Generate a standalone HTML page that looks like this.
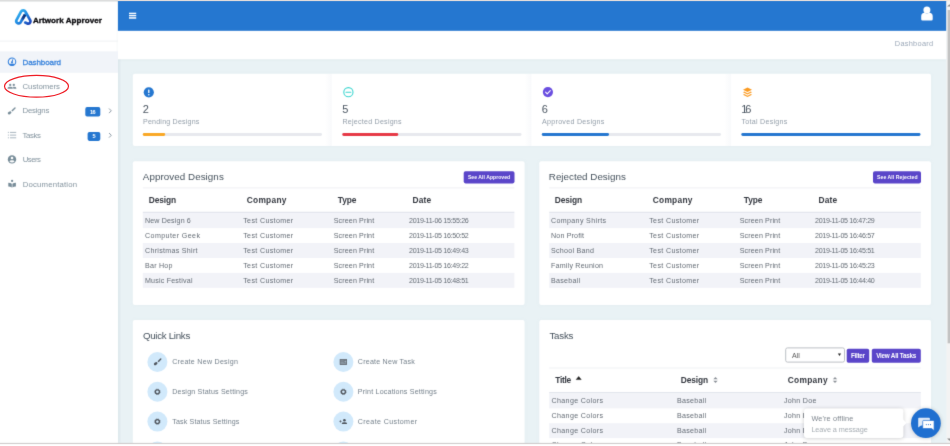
<!DOCTYPE html>
<html><head><meta charset="utf-8">
<style>
*{box-sizing:border-box;margin:0;padding:0}
html,body{width:950px;height:446px;overflow:hidden;background:#e9f2f5;font-family:"Liberation Sans",sans-serif}
svg{position:absolute;left:0;top:0}
</style></head><body>
<svg width="950" height="446" viewBox="0 0 950 446" font-family="Liberation Sans, sans-serif">
<defs>
<filter id="soft" x="0" y="0" width="100%" height="100%" filterUnits="userSpaceOnUse" color-interpolation-filters="sRGB"><feConvolveMatrix order="3" kernelMatrix="0.0113 0.0838 0.0113 0.0838 0.6193 0.0838 0.0113 0.0838 0.0113" edgeMode="duplicate" preserveAlpha="true"/></filter>
<linearGradient id="lg" gradientUnits="userSpaceOnUse" x1="16" y1="10" x2="31" y2="25"><stop offset="0" stop-color="#38c2f6"/><stop offset=".5" stop-color="#1f86e0"/><stop offset="1" stop-color="#1a35b0"/></linearGradient>
<linearGradient id="lg2" gradientUnits="userSpaceOnUse" x1="25" y1="14.8" x2="21.2" y2="21.3"><stop offset="0" stop-color="#0b2a6e"/><stop offset=".55" stop-color="#123f96"/><stop offset="1" stop-color="#1f7fdc" stop-opacity=".0"/></linearGradient>
<filter id="sh" x="-5%" y="-10%" width="110%" height="120%"><feGaussianBlur stdDeviation="2"/></filter>
<filter id="sh2" x="-20%" y="-20%" width="140%" height="140%"><feGaussianBlur stdDeviation="1.6"/></filter>
<linearGradient id="cg" x1="0" x2="1"><stop offset="0" stop-color="#fff"/><stop offset="1" stop-color="#f4f6f9"/></linearGradient>
<g id="gear"><circle r="2" fill="none" stroke="#50565e" stroke-width="1.3"/><circle r="2.65" fill="none" stroke="#50565e" stroke-width=".9" stroke-dasharray="1.04 1.04"/></g>
<path id="sort" d="M-2.2 -0.7 L0 -3.1 L2.2 -0.7Z M-2.2 0.7 L0 3.1 L2.2 0.7Z" fill="#8b9097"/>
<path id="chev" d="M-1.2 -2.3 L1.1 0 L-1.2 2.3" fill="none" stroke="#8d9ba6" stroke-width="1"/>
</defs>
<g filter="url(#soft)">
<!-- background & chrome -->
<rect x="0" y="0" width="950" height="446" fill="#e9f2f5"/>
<rect x="0" y="0" width="118" height="1.7" fill="#dcdcdc"/><rect x="118" y="0" width="832" height="1.1" fill="#f6e7dc"/>
<!-- sidebar -->
<rect x="116" y="31" width="3.5" height="412" fill="#6f8797" opacity=".12" filter="url(#sh2)"/>
<rect x="0" y="1.7" width="118" height="442" fill="#fff"/>
<!-- header -->
<rect x="118" y="30" width="828.4" height="29.6" fill="#6f8797" opacity=".10" filter="url(#sh2)"/>
<rect x="118" y="30.5" width="828.4" height="28.8" fill="#fff"/>
<rect x="117.9" y="1" width="828.5" height="29.8" fill="#2577d0"/>
<!-- logo -->
<path d="M25 14.8 L20.4 22.6 A2.4 2.4 0 0 1 16.3 20.4 L21 11.6 A2.5 2.5 0 0 1 25.4 11.6 L30.4 20.6 A2.4 2.4 0 0 1 27.4 23.6 L25.2 22.6" fill="none" stroke="url(#lg)" stroke-width="2.7" stroke-linecap="round" stroke-linejoin="round"/>
<path d="M25 14.8 L21.2 21.3" fill="none" stroke="url(#lg2)" stroke-width="2.7"/>
<rect x="0" y="40.6" width="118" height="1" fill="#f1f2f4"/>
<!-- nav -->
<rect x="0" y="51.3" width="118" height="21.5" fill="#f1f4f9"/>
<g transform="translate(7 56.8)"><circle cx="5" cy="5" r="3.75" fill="none" stroke="#3380dc" stroke-width="1.05"/><path d="M5 5.5 L5.7 2.9" stroke="#3380dc" stroke-width="1" stroke-linecap="round"/><circle cx="5" cy="5.5" r="0.95" fill="#3380dc"/><path d="M2.1 7.3 Q5 6 7.9 7.3 L7.2 8.4 Q5 9.3 2.8 8.4Z" fill="#3380dc"/></g>
<g transform="translate(7 82)" fill="#7c8f9b"><circle cx="3.2" cy="2.9" r="1.15"/><circle cx="6.8" cy="2.9" r="1.15"/><path d="M0.6 6.8 V6.1 Q0.6 4.8 3.2 4.8 Q5.5 4.8 5.8 5.8 V6.8Z"/><path d="M6.3 6.8 V5.8 Q6.2 5.3 5.8 4.95 Q6.3 4.8 6.8 4.8 Q9.3 4.8 9.3 6.1 V6.8Z"/></g>
<g transform="translate(6.6 105.9)" fill="#788d99"><path d="M8.9 1.5 Q9.3 2 8.8 2.6 L5.9 5.6 L4.8 4.6 L7.9 1.6 Q8.5 1.1 8.9 1.5Z"/><ellipse cx="3" cy="6.9" rx="2" ry="1.3" transform="rotate(-32 3 6.9)"/></g>
<g transform="translate(7 131)" stroke="#98a8b3" stroke-width=".85"><path d="M3 1.4H9.2M3 4.1H9.2M3 6.8H9.2"/><path d="M0.9 1.4H1.9M0.9 4.1H1.9M0.9 6.8H1.9"/></g>
<g transform="translate(7 154.6)"><circle cx="5" cy="4.8" r="4.2" fill="#788d99"/><circle cx="5" cy="3.4" r="1.3" fill="#fff"/><path d="M2.5 7 Q2.8 5.6 5 5.6 Q7.2 5.6 7.5 7 Q6.5 8 5 8 Q3.5 8 2.5 7Z" fill="#fff"/></g>
<g transform="translate(7.1 178.5)" fill="#788d99"><circle cx="5" cy="2.4" r="1.15"/><path d="M1.2 4.2 Q3.4 4.3 4.7 5.3 V8.9 Q3.4 8 1.2 7.9Z"/><path d="M8.8 4.2 Q6.6 4.3 5.3 5.3 V8.9 Q6.6 8 8.8 7.9Z"/></g>
<rect x="85.3" y="107.1" width="15" height="9.5" rx="1.8" fill="#2577d0"/>
<rect x="87.6" y="131.9" width="12.7" height="9" rx="1.8" fill="#2577d0"/>
<use href="#chev" x="110.2" y="110.8"/>
<use href="#chev" x="110.2" y="135.3"/>
<!-- header icons -->
<rect x="129" y="12.7" width="7.2" height="1.4" fill="#fff"/>
<rect x="129" y="14.9" width="7.2" height="1.4" fill="#fff"/>
<rect x="129" y="17.2" width="7.2" height="1.5" fill="#fff"/>
<circle cx="926.9" cy="10.1" r="3.5" fill="#fff"/>
<path d="M921.2 19.2 V16.2 Q921.2 13 924.6 12.8 Q926.9 14.2 929.2 12.8 Q932.7 13 932.7 16.2 V19.2 Q932.7 20.4 931.4 20.4 H922.5 Q921.2 20.4 921.2 19.2Z" fill="#fff"/>

<!-- card shadows -->
<g fill="#7f9aa8" opacity=".05" filter="url(#sh)">
<rect x="132.8" y="73.8" width="798.2" height="72.3"/>
<rect x="132.8" y="161.3" width="391.8" height="143.8"/>
<rect x="539.3" y="161.3" width="391.7" height="143.8"/>
<rect x="132.8" y="320" width="391.8" height="130"/>
<rect x="539.3" y="320" width="391.7" height="130"/>
</g>
<!-- stats card -->
<rect x="132.8" y="73.8" width="798.2" height="72.3" rx="2" fill="#fff"/>
<rect x="325" y="74" width="6.8" height="72" fill="url(#cg)" opacity=".6"/>
<rect x="524.6" y="74" width="6.8" height="72" fill="url(#cg)" opacity=".6"/>
<rect x="724.2" y="74" width="6.8" height="72" fill="url(#cg)" opacity=".6"/>
<g fill="#e7e9ee">
<rect x="142.8" y="133.1" width="179.2" height="2.9" rx="1.4"/>
<rect x="342.3" y="133.1" width="179.2" height="2.9" rx="1.4"/>
<rect x="541.8" y="133.1" width="179.2" height="2.9" rx="1.4"/>
</g>
<rect x="142.8" y="133.1" width="22.4" height="2.9" rx="1.4" fill="#f9a826"/>
<rect x="342.3" y="133.1" width="56" height="2.9" rx="1.4" fill="#e63946"/>
<rect x="541.8" y="133.1" width="67.2" height="2.9" rx="1.4" fill="#2577d0"/>
<rect x="741.3" y="133.1" width="179.2" height="2.9" rx="1.4" fill="#2577d0"/>
<circle cx="148.8" cy="92.3" r="5.1" fill="#2577d0"/><rect x="148.15" y="89.4" width="1.3" height="3.6" rx=".5" fill="#fff"/><circle cx="148.8" cy="94.7" r=".75" fill="#fff"/>
<circle cx="348.4" cy="92.2" r="4.6" fill="none" stroke="#3dd6d0" stroke-width="1.1"/><path d="M346 92.3H350.8" stroke="#3dd6d0" stroke-width="1.1" stroke-linecap="round"/>
<circle cx="547.9" cy="92.1" r="5.1" fill="#6a4ee0"/><path d="M545.6 92.2 L547.2 93.8 L550.3 90.6" fill="none" stroke="#fff" stroke-width="1.1" stroke-linecap="round" stroke-linejoin="round"/>
<g fill="#fb9b22"><path d="M747.5 87.6 L752 89.8 L747.5 92 L743 89.8Z"/><path d="M743 92.2 L744.2 91.6 L747.5 93.2 L750.8 91.6 L752 92.2 L747.5 94.5Z"/><path d="M743 94.7 L744.2 94.1 L747.5 95.7 L750.8 94.1 L752 94.7 L747.5 97Z"/></g>

<!-- table cards -->
<rect x="132.8" y="161.3" width="391.8" height="143.8" rx="2" fill="#fff"/>
<rect x="539.3" y="161.3" width="391.7" height="143.8" rx="2" fill="#fff"/>
<rect x="132.8" y="320" width="391.8" height="130" rx="2" fill="#fff"/>
<rect x="539.3" y="320" width="391.7" height="130" rx="2" fill="#fff"/>
<g fill="#f0f1f4"><rect x="142.8" y="187.4" width="371.6" height="1"/><rect x="549.2" y="187.4" width="371.6" height="1"/><rect x="549.2" y="367.5" width="371.6" height="1"/></g>
<g fill="#e3e6ed"><rect x="142.8" y="211.7" width="371.6" height="1.5"/><rect x="549.2" y="211.7" width="371.6" height="1.5"/><rect x="549.2" y="392" width="371.6" height="1.5"/></g>
<g fill="#f2f3f8">
<rect x="142.8" y="213.20" width="371.6" height="14.93"/><rect x="142.8" y="243.06" width="371.6" height="14.93"/><rect x="142.8" y="272.92" width="371.6" height="14.93"/><rect x="549.2" y="213.20" width="371.6" height="14.93"/><rect x="549.2" y="243.06" width="371.6" height="14.93"/><rect x="549.2" y="272.92" width="371.6" height="14.93"/><rect x="549.2" y="393.5" width="371.6" height="14.9"/><rect x="549.2" y="423.2" width="371.6" height="14.9"/>
</g>
<g fill="#5a45c9">
<rect x="463.7" y="171.3" width="50.8" height="12.1" rx="1.8"/>
<rect x="873" y="171.3" width="48" height="12.1" rx="1.8"/>
<rect x="846.7" y="348.7" width="22.5" height="14" rx="1.8"/>
<rect x="871.8" y="348.7" width="49" height="14" rx="1.8"/>
</g>
<!-- quick links -->
<g fill="#d1e9fb">
<circle cx="157.4" cy="362" r="10"/><circle cx="157.4" cy="391.8" r="10"/><circle cx="157.4" cy="421.6" r="10"/><circle cx="157.4" cy="451.4" r="10"/>
<circle cx="343.4" cy="362" r="10"/><circle cx="343.4" cy="391.8" r="10"/><circle cx="343.4" cy="421.6" r="10"/><circle cx="343.4" cy="451.4" r="10"/>
</g>
<g transform="translate(152.4 357)" fill="#50565e"><path d="M8.9 1.5 Q9.3 2 8.8 2.6 L6.3 5.2 L5.2 4.2 L7.9 1.6 Q8.5 1.1 8.9 1.5Z"/><ellipse cx="3.3" cy="6.6" rx="1.95" ry="1.3" transform="rotate(-32 3.3 6.6)"/></g>
<use href="#gear" x="157.4" y="391.8"/>
<use href="#gear" x="157.4" y="421.6"/>
<use href="#gear" x="343.4" y="391.8"/>
<g transform="translate(338.4 357)"><rect x="1.3" y="1.9" width="7.3" height="6.1" rx=".4" fill="#656c74"/><path d="M2.1 3.9H5.4M2.1 5.3H5.4M2.1 6.7H7.8" stroke="#d1e9fb" stroke-width=".55" opacity=".75"/><rect x="6.1" y="3.6" width="1.7" height="2" fill="#d1e9fb" opacity=".55"/><path d="M2.1 2.8H7.8" stroke="#d1e9fb" stroke-width=".4" opacity=".4"/></g>
<g transform="translate(338.4 416.6)"><g fill="#4a5159"><circle cx="6" cy="3.7" r="1.3"/><path d="M3.4 7.4 V6.8 Q3.4 5.6 6 5.6 Q8.6 5.6 8.6 6.8 V7.4Z"/></g><path d="M1 4.8H3.2M2.1 3.7V5.9" stroke="#4a5159" stroke-width=".7"/></g>
<!-- tasks controls -->
<rect x="785.7" y="347.9" width="58.8" height="14.2" rx="1.8" fill="#fff" stroke="#bcc0c5" stroke-width="1"/>
<path d="M837.9 353.6H841.1L839.5 356Z" fill="#222"/>
<path d="M576.2 379.6 L578.7 376.5 L581.2 379.6Z" fill="#222" stroke="#222" stroke-width=".5" stroke-linejoin="round"/>
<use href="#sort" x="715.5" y="380"/>
<use href="#sort" x="835" y="380"/>


<text x="33.0" y="23" font-size="8" fill="#0b0b0f" font-weight="bold" letter-spacing="0.072" stroke="#0b0b0f" stroke-width=".35">Artwork Approver</text>
<text x="22.5" y="65" font-size="8" fill="#3a84dc" letter-spacing="-0.080" stroke="#3a84dc" stroke-width=".3">Dashboard</text>
<text x="22.5" y="89" font-size="7.8" fill="#84949f" letter-spacing="-0.038">Customers</text>
<text x="22.5" y="113" font-size="7.8" fill="#84949f" letter-spacing="-0.229">Designs</text>
<text x="22.5" y="138" font-size="7.8" fill="#84949f" letter-spacing="-0.359">Tasks</text>
<text x="22.7" y="162" font-size="7.8" fill="#84949f" letter-spacing="-0.544">Users</text>
<text x="22.7" y="187" font-size="7.8" fill="#84949f" letter-spacing="0.154">Documentation</text>
<text x="89.9" y="114" font-size="5.6" fill="#fff" font-weight="bold" letter-spacing="-0.434">16</text>
<text x="92.4" y="138.4" font-size="5.6" fill="#fff" font-weight="bold">5</text>
<text x="894.8" y="46" font-size="7.4" fill="#9ba8b8" letter-spacing="0.268">Dashboard</text>
<text x="142.8" y="113" font-size="11" fill="#4a5561">2</text>
<text x="143.0" y="124" font-size="7.1" fill="#939ea9" letter-spacing="0.197">Pending Designs</text>
<text x="342.3" y="113" font-size="11" fill="#4a5561">5</text>
<text x="342.5" y="124" font-size="7.1" fill="#939ea9" letter-spacing="0.233">Rejected Designs</text>
<text x="541.8" y="113" font-size="11" fill="#4a5561">6</text>
<text x="542.0" y="124" font-size="7.1" fill="#939ea9" letter-spacing="0.289">Approved Designs</text>
<text x="741.3" y="113" font-size="11" fill="#4a5561" letter-spacing="-2.250">16</text>
<text x="741.5" y="124" font-size="7.1" fill="#939ea9" letter-spacing="0.267">Total Designs</text>
<text x="142.8" y="180" font-size="9.8" fill="#46525d" letter-spacing="0.062">Approved Designs</text>
<text x="548.8" y="180" font-size="9.8" fill="#46525d" letter-spacing="0.014">Rejected Designs</text>
<text x="142.9" y="339" font-size="9.7" fill="#46525d" letter-spacing="-0.268">Quick Links</text>
<text x="549.4" y="339" font-size="9.7" fill="#46525d" letter-spacing="-0.191">Tasks</text>
<text x="467.9" y="179" font-size="5.1" fill="#fff" font-weight="bold" letter-spacing="0.034">See All Approved</text>
<text x="877.0" y="179" font-size="5.1" fill="#fff" font-weight="bold" letter-spacing="0.076">See All Rejected</text>
<text x="851.0" y="358" font-size="6.3" fill="#fff" font-weight="bold" letter-spacing="-0.281">Filter</text>
<text x="876.2" y="358" font-size="6.3" fill="#fff" font-weight="bold" letter-spacing="-0.218">View All Tasks</text>
<text x="791.9" y="358" font-size="7" fill="#555" letter-spacing="0.059">All</text>
<text x="148.8" y="203" font-size="8.4" fill="#33373f" font-weight="bold" letter-spacing="-0.108">Design</text>
<text x="246.7" y="203" font-size="8.4" fill="#33373f" font-weight="bold" letter-spacing="0.271">Company</text>
<text x="337.7" y="203" font-size="8.4" fill="#33373f" font-weight="bold" letter-spacing="-0.046">Type</text>
<text x="412.4" y="203" font-size="8.4" fill="#33373f" font-weight="bold" letter-spacing="0.215">Date</text>
<text x="554.8" y="203" font-size="8.4" fill="#33373f" font-weight="bold" letter-spacing="-0.108">Design</text>
<text x="652.7" y="203" font-size="8.4" fill="#33373f" font-weight="bold" letter-spacing="0.271">Company</text>
<text x="743.7" y="203" font-size="8.4" fill="#33373f" font-weight="bold" letter-spacing="-0.046">Type</text>
<text x="818.4" y="203" font-size="8.4" fill="#33373f" font-weight="bold" letter-spacing="0.215">Date</text>
<text x="145.0" y="223" font-size="7.1" fill="#636b74" letter-spacing="0.148">New Design 6</text>
<text x="243.2" y="223" font-size="7.1" fill="#636b74" letter-spacing="0.355">Test Customer</text>
<text x="333.7" y="223" font-size="7.1" fill="#636b74" letter-spacing="0.132">Screen Print</text>
<text x="409.0" y="223" font-size="7.1" fill="#636b74" letter-spacing="-0.308">2019-11-06 15:55:26</text>
<text x="145.0" y="238" font-size="7.1" fill="#636b74" letter-spacing="0.410">Computer Geek</text>
<text x="243.2" y="238" font-size="7.1" fill="#636b74" letter-spacing="0.355">Test Customer</text>
<text x="333.7" y="238" font-size="7.1" fill="#636b74" letter-spacing="0.132">Screen Print</text>
<text x="409.0" y="238" font-size="7.1" fill="#636b74" letter-spacing="-0.308">2019-11-05 16:50:52</text>
<text x="145.0" y="253" font-size="7.1" fill="#636b74" letter-spacing="0.287">Christmas Shirt</text>
<text x="243.2" y="253" font-size="7.1" fill="#636b74" letter-spacing="0.355">Test Customer</text>
<text x="333.7" y="253" font-size="7.1" fill="#636b74" letter-spacing="0.132">Screen Print</text>
<text x="409.0" y="253" font-size="7.1" fill="#636b74" letter-spacing="-0.308">2019-11-05 16:49:43</text>
<text x="145.0" y="268" font-size="7.1" fill="#636b74" letter-spacing="0.245">Bar Hop</text>
<text x="243.2" y="268" font-size="7.1" fill="#636b74" letter-spacing="0.355">Test Customer</text>
<text x="333.7" y="268" font-size="7.1" fill="#636b74" letter-spacing="0.132">Screen Print</text>
<text x="409.0" y="268" font-size="7.1" fill="#636b74" letter-spacing="-0.308">2019-11-05 16:49:22</text>
<text x="145.0" y="283" font-size="7.1" fill="#636b74" letter-spacing="0.197">Music Festival</text>
<text x="243.2" y="283" font-size="7.1" fill="#636b74" letter-spacing="0.355">Test Customer</text>
<text x="333.7" y="283" font-size="7.1" fill="#636b74" letter-spacing="0.132">Screen Print</text>
<text x="409.0" y="283" font-size="7.1" fill="#636b74" letter-spacing="-0.308">2019-11-05 16:48:51</text>
<text x="551.0" y="223" font-size="7.1" fill="#636b74" letter-spacing="0.349">Company Shirts</text>
<text x="649.2" y="223" font-size="7.1" fill="#636b74" letter-spacing="0.355">Test Customer</text>
<text x="739.7" y="223" font-size="7.1" fill="#636b74" letter-spacing="0.132">Screen Print</text>
<text x="815.0" y="223" font-size="7.1" fill="#636b74" letter-spacing="-0.308">2019-11-05 16:47:29</text>
<text x="551.0" y="238" font-size="7.1" fill="#636b74" letter-spacing="0.161">Non Profit</text>
<text x="649.2" y="238" font-size="7.1" fill="#636b74" letter-spacing="0.355">Test Customer</text>
<text x="739.7" y="238" font-size="7.1" fill="#636b74" letter-spacing="0.132">Screen Print</text>
<text x="815.0" y="238" font-size="7.1" fill="#636b74" letter-spacing="-0.308">2019-11-05 16:46:57</text>
<text x="551.0" y="253" font-size="7.1" fill="#636b74" letter-spacing="0.277">School Band</text>
<text x="649.2" y="253" font-size="7.1" fill="#636b74" letter-spacing="0.355">Test Customer</text>
<text x="739.7" y="253" font-size="7.1" fill="#636b74" letter-spacing="0.132">Screen Print</text>
<text x="815.0" y="253" font-size="7.1" fill="#636b74" letter-spacing="-0.308">2019-11-05 16:45:51</text>
<text x="551.0" y="268" font-size="7.1" fill="#636b74" letter-spacing="0.208">Family Reunion</text>
<text x="649.2" y="268" font-size="7.1" fill="#636b74" letter-spacing="0.355">Test Customer</text>
<text x="739.7" y="268" font-size="7.1" fill="#636b74" letter-spacing="0.132">Screen Print</text>
<text x="815.0" y="268" font-size="7.1" fill="#636b74" letter-spacing="-0.308">2019-11-05 16:45:23</text>
<text x="551.0" y="283" font-size="7.1" fill="#636b74" letter-spacing="0.297">Baseball</text>
<text x="649.2" y="283" font-size="7.1" fill="#636b74" letter-spacing="0.355">Test Customer</text>
<text x="739.7" y="283" font-size="7.1" fill="#636b74" letter-spacing="0.132">Screen Print</text>
<text x="815.0" y="283" font-size="7.1" fill="#636b74" letter-spacing="-0.308">2019-11-05 16:44:40</text>
<text x="172.2" y="364" font-size="7.1" fill="#74808b" letter-spacing="0.262">Create New Design</text>
<text x="172.2" y="394" font-size="7.1" fill="#74808b" letter-spacing="0.187">Design Status Settings</text>
<text x="172.2" y="424" font-size="7.1" fill="#74808b" letter-spacing="0.154">Task Status Settings</text>
<text x="357.8" y="364" font-size="7.1" fill="#74808b" letter-spacing="0.222">Create New Task</text>
<text x="357.8" y="394" font-size="7.1" fill="#74808b" letter-spacing="0.190">Print Locations Settings</text>
<text x="357.8" y="424" font-size="7.1" fill="#74808b" letter-spacing="0.377">Create Customer</text>
<text x="555.3" y="383" font-size="8.4" fill="#33373f" font-weight="bold" letter-spacing="-0.320">Title</text>
<text x="680.8" y="383" font-size="8.4" fill="#33373f" font-weight="bold" letter-spacing="-0.108">Design</text>
<text x="787.8" y="383" font-size="8.4" fill="#33373f" font-weight="bold" letter-spacing="0.271">Company</text>
<text x="551.5" y="403" font-size="7.1" fill="#636b74" letter-spacing="0.356">Change Colors</text>
<text x="676.9" y="403" font-size="7.1" fill="#636b74" letter-spacing="0.297">Baseball</text>
<text x="784.0" y="403" font-size="7.1" fill="#636b74" letter-spacing="0.289">John Doe</text>
<text x="551.5" y="418" font-size="7.1" fill="#636b74" letter-spacing="0.356">Change Colors</text>
<text x="676.9" y="418" font-size="7.1" fill="#636b74" letter-spacing="0.297">Baseball</text>
<text x="784.0" y="418" font-size="7.1" fill="#636b74" letter-spacing="0.289">John Doe</text>
<text x="551.5" y="433" font-size="7.1" fill="#636b74" letter-spacing="0.356">Change Colors</text>
<text x="676.9" y="433" font-size="7.1" fill="#636b74" letter-spacing="0.297">Baseball</text>
<text x="784.0" y="433" font-size="7.1" fill="#636b74" letter-spacing="0.289">John Doe</text>
<text x="551.5" y="447" font-size="7.1" fill="#636b74" letter-spacing="0.356">Change Colors</text>
<text x="676.9" y="447" font-size="7.1" fill="#636b74" letter-spacing="0.297">Baseball</text>
<text x="784.0" y="447" font-size="7.1" fill="#636b74" letter-spacing="0.289">John Doe</text>


<defs><filter id="sh3" x="-20%" y="-40%" width="140%" height="180%"><feGaussianBlur stdDeviation="2.2"/></filter></defs>
<!-- chat -->
<rect x="804" y="409" width="99.4" height="29.4" rx="3" fill="#000" opacity=".2" filter="url(#sh3)"/>
<circle cx="925.9" cy="423.6" r="15" fill="#000" opacity=".18" filter="url(#sh3)"/>
<rect x="804" y="408.6" width="99.4" height="29.4" rx="3" fill="#fff"/>
<path d="M903 419.5 L906.5 423 L903 426.5Z" fill="#fff"/>
<circle cx="925.9" cy="423.2" r="14.9" fill="#1f6fd0"/>
<path d="M919 417.8 H929 Q929.9 417.8 929.9 418.7 V424.6 Q929.9 425.5 929 425.5 H921 L918.2 427.6 V418.7 Q918.2 417.8 919 417.8Z" fill="#fff" opacity=".85"/>
<path d="M923.7 420.4 H933.2 Q934.1 420.4 934.1 421.3 V430.6 L931.6 428.6 H923.7 Q922.7 428.6 922.7 427.7 V421.3 Q922.7 420.4 923.7 420.4Z" fill="#fff" stroke="#1f6fd0" stroke-width=".7"/>
<g fill="#1f6fd0"><circle cx="926.3" cy="424.6" r=".55"/><circle cx="928.4" cy="424.6" r=".55"/><circle cx="930.5" cy="424.6" r=".55"/></g>
<!-- scrollbar & bottom -->
<rect x="946.4" y="1.3" width="3.6" height="442" fill="#f3f3f3"/>
<rect x="947.6" y="10" width="2.4" height="333.3" fill="#c2c2c2"/>
<path d="M947.1 6.6 L949.5 4.2 L950 4.7 V6.6Z" fill="#8c8c8c"/>
<path d="M947.1 438.4 L949.5 440.8 L950 440.3 V438.4Z" fill="#8c8c8c"/>
<rect x="0" y="443" width="950" height="3" fill="#fff"/>
<rect x="0" y="442.9" width="950" height="1.1" fill="#cfcbcb"/>


<text x="811.4" y="421" font-size="7.3" fill="#7d858d" letter-spacing="0.145">We&#x27;re offline</text>
<text x="811.4" y="432" font-size="7.3" fill="#a6adb3" letter-spacing="-0.079">Leave a message</text>
</g>
<ellipse cx="36.5" cy="86.3" rx="32" ry="10.9" fill="none" stroke="#ee1d26" stroke-width="1.2"/>
</svg>
</body></html>
